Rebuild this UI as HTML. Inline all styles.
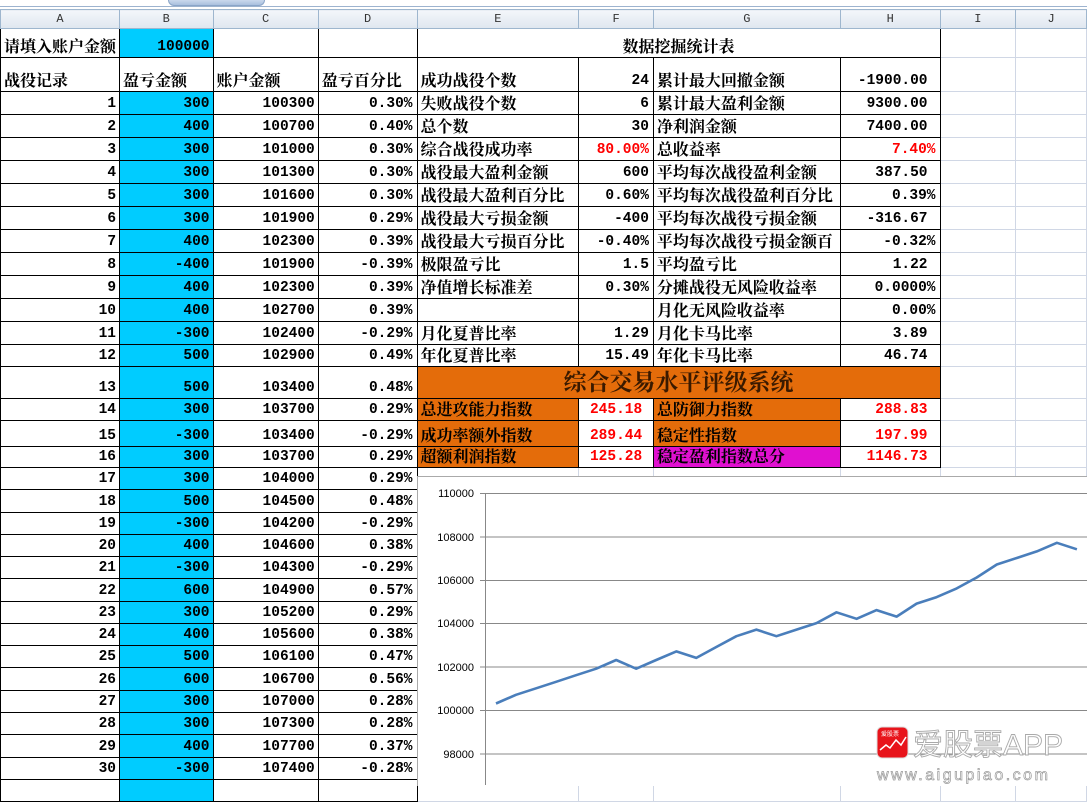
<!DOCTYPE html>
<html><head><meta charset="utf-8"><style>
body{margin:0;width:1087px;height:785px;overflow:hidden;background:#fff;position:relative;font-family:"Liberation Serif","Noto Serif CJK SC",serif;}
#top{position:absolute;left:0;top:0;width:1087px;height:6px;border-bottom:1px solid #9db3cf;background:#fff}
#tab{position:absolute;left:168px;top:0;width:95px;height:5px;background:linear-gradient(#c9d8ec,#a9c0de);border-radius:0 0 8px 8px;border:1px solid #8aa5c8;border-top:none}
table{position:absolute;left:0;top:9px;border-collapse:collapse;table-layout:fixed;}
td{border:1px solid #d0d7e5;padding:0 3px;white-space:nowrap;overflow:hidden;vertical-align:bottom;font-weight:bold;font-size:16px;line-height:19px;font-family:"Liberation Serif","Noto Serif CJK SC",serif;color:#000}
tr.h td{background:linear-gradient(#f3f6fa,#dfe6ef);border:1px solid #9eb6ce;font:12px "Liberation Mono",monospace;text-align:center;vertical-align:middle;color:#333;line-height:16px}
td.k{border-color:#000}
td.n{font-family:"Liberation Mono",monospace;font-size:14.5px;text-align:right}
td.bl{background:#00ccff}
td.r{color:#f00}
td.o{background:#e46c0a}
td.m{background:#e010d0}
td.p4{padding-right:4px}td.p12{padding-right:12px}
#chart{position:absolute;left:417px;top:476px;width:670px;height:309px;background:#fff;border-left:1px solid #aaa;border-top:1px solid #aaa}
</style></head><body>
<div id="top"></div><div id="tab"></div>
<table>
<colgroup><col style="width:115px"><col style="width:94px"><col style="width:106px"><col style="width:99px"><col style="width:162px"><col style="width:75px"><col style="width:187px"><col style="width:100px"><col style="width:77px"><col style="width:72px"></colgroup>
<tr class="h" style="height:19px"><td>A</td><td>B</td><td>C</td><td>D</td><td>E</td><td>F</td><td>G</td><td>H</td><td>I</td><td>J</td></tr>
<tr style="height:29px"><td class="k">请填入账户金额</td><td class="k n bl">100000</td><td class="k"></td><td class="k"></td><td class="k" colspan="4" style="text-align:center">数据挖掘统计表</td><td></td><td></td></tr>
<tr style="height:34px"><td class="k">战役记录</td><td class="k">盈亏金额</td><td class="k">账户金额</td><td class="k">盈亏百分比</td><td class="k">成功战役个数</td><td class="k n p4">24</td><td class="k">累计最大回撤金额</td><td class="k n p12">-1900.00</td><td></td><td></td></tr>
<tr style="height:23px"><td class="k n">1</td><td class="k n bl">300</td><td class="k n">100300</td><td class="k n p4">0.30%</td><td class="k">失败战役个数</td><td class="k n p4">6</td><td class="k">累计最大盈利金额</td><td class="k n p12">9300.00</td><td></td><td></td></tr>
<tr style="height:23px"><td class="k n">2</td><td class="k n bl">400</td><td class="k n">100700</td><td class="k n p4">0.40%</td><td class="k">总个数</td><td class="k n p4">30</td><td class="k">净利润金额</td><td class="k n p12">7400.00</td><td></td><td></td></tr>
<tr style="height:23px"><td class="k n">3</td><td class="k n bl">300</td><td class="k n">101000</td><td class="k n p4">0.30%</td><td class="k">综合战役成功率</td><td class="k n p4 r">80.00%</td><td class="k">总收益率</td><td class="k n p4 r">7.40%</td><td></td><td></td></tr>
<tr style="height:23px"><td class="k n">4</td><td class="k n bl">300</td><td class="k n">101300</td><td class="k n p4">0.30%</td><td class="k">战役最大盈利金额</td><td class="k n p4">600</td><td class="k">平均每次战役盈利金额</td><td class="k n p12">387.50</td><td></td><td></td></tr>
<tr style="height:23px"><td class="k n">5</td><td class="k n bl">300</td><td class="k n">101600</td><td class="k n p4">0.30%</td><td class="k">战役最大盈利百分比</td><td class="k n p4">0.60%</td><td class="k">平均每次战役盈利百分比</td><td class="k n p4">0.39%</td><td></td><td></td></tr>
<tr style="height:23px"><td class="k n">6</td><td class="k n bl">300</td><td class="k n">101900</td><td class="k n p4">0.29%</td><td class="k">战役最大亏损金额</td><td class="k n p4">-400</td><td class="k">平均每次战役亏损金额</td><td class="k n p12">-316.67</td><td></td><td></td></tr>
<tr style="height:23px"><td class="k n">7</td><td class="k n bl">400</td><td class="k n">102300</td><td class="k n p4">0.39%</td><td class="k">战役最大亏损百分比</td><td class="k n p4">-0.40%</td><td class="k">平均每次战役亏损金额百</td><td class="k n p4">-0.32%</td><td></td><td></td></tr>
<tr style="height:23px"><td class="k n">8</td><td class="k n bl">-400</td><td class="k n">101900</td><td class="k n p4">-0.39%</td><td class="k">极限盈亏比</td><td class="k n p4">1.5</td><td class="k">平均盈亏比</td><td class="k n p12">1.22</td><td></td><td></td></tr>
<tr style="height:23px"><td class="k n">9</td><td class="k n bl">400</td><td class="k n">102300</td><td class="k n p4">0.39%</td><td class="k">净值增长标准差</td><td class="k n p4">0.30%</td><td class="k">分摊战役无风险收益率</td><td class="k n p4">0.0000%</td><td></td><td></td></tr>
<tr style="height:23px"><td class="k n">10</td><td class="k n bl">400</td><td class="k n">102700</td><td class="k n p4">0.39%</td><td class="k"></td><td class="k"></td><td class="k">月化无风险收益率</td><td class="k n p4">0.00%</td><td></td><td></td></tr>
<tr style="height:23px"><td class="k n">11</td><td class="k n bl">-300</td><td class="k n">102400</td><td class="k n p4">-0.29%</td><td class="k">月化夏普比率</td><td class="k n p4">1.29</td><td class="k">月化卡马比率</td><td class="k n p12">3.89</td><td></td><td></td></tr>
<tr style="height:22px"><td class="k n">12</td><td class="k n bl">500</td><td class="k n">102900</td><td class="k n p4">0.49%</td><td class="k">年化夏普比率</td><td class="k n p4">15.49</td><td class="k">年化卡马比率</td><td class="k n p12">46.74</td><td></td><td></td></tr>
<tr style="height:32px"><td class="k n">13</td><td class="k n bl">500</td><td class="k n">103400</td><td class="k n p4">0.48%</td><td class="k o" colspan="4" style="text-align:center;font-size:23px;line-height:28px;vertical-align:middle;color:#3a1a00">综合交易水平评级系统</td><td></td><td></td></tr>
<tr style="height:22px"><td class="k n">14</td><td class="k n bl">300</td><td class="k n">103700</td><td class="k n p4">0.29%</td><td class="k o">总进攻能力指数</td><td class="k n r" style="text-align:center">245.18</td><td class="k o">总防御力指数</td><td class="k n p12 r">288.83</td><td></td><td></td></tr>
<tr style="height:26px"><td class="k n">15</td><td class="k n bl">-300</td><td class="k n">103400</td><td class="k n p4">-0.29%</td><td class="k o">成功率额外指数</td><td class="k n r" style="text-align:center">289.44</td><td class="k o">稳定性指数</td><td class="k n p12 r">197.99</td><td></td><td></td></tr>
<tr style="height:21px"><td class="k n">16</td><td class="k n bl">300</td><td class="k n">103700</td><td class="k n p4">0.29%</td><td class="k o">超额利润指数</td><td class="k n r" style="text-align:center">125.28</td><td class="k m">稳定盈利指数总分</td><td class="k n p12 r">1146.73</td><td></td><td></td></tr>
<tr style="height:22px"><td class="k n">17</td><td class="k n bl">300</td><td class="k n">104000</td><td class="k n p4">0.29%</td><td></td><td></td><td></td><td></td><td></td><td></td></tr>
<tr style="height:23px"><td class="k n">18</td><td class="k n bl">500</td><td class="k n">104500</td><td class="k n p4">0.48%</td><td></td><td></td><td></td><td></td><td></td><td></td></tr>
<tr style="height:22px"><td class="k n">19</td><td class="k n bl">-300</td><td class="k n">104200</td><td class="k n p4">-0.29%</td><td></td><td></td><td></td><td></td><td></td><td></td></tr>
<tr style="height:22px"><td class="k n">20</td><td class="k n bl">400</td><td class="k n">104600</td><td class="k n p4">0.38%</td><td></td><td></td><td></td><td></td><td></td><td></td></tr>
<tr style="height:22px"><td class="k n">21</td><td class="k n bl">-300</td><td class="k n">104300</td><td class="k n p4">-0.29%</td><td></td><td></td><td></td><td></td><td></td><td></td></tr>
<tr style="height:23px"><td class="k n">22</td><td class="k n bl">600</td><td class="k n">104900</td><td class="k n p4">0.57%</td><td></td><td></td><td></td><td></td><td></td><td></td></tr>
<tr style="height:22px"><td class="k n">23</td><td class="k n bl">300</td><td class="k n">105200</td><td class="k n p4">0.29%</td><td></td><td></td><td></td><td></td><td></td><td></td></tr>
<tr style="height:22px"><td class="k n">24</td><td class="k n bl">400</td><td class="k n">105600</td><td class="k n p4">0.38%</td><td></td><td></td><td></td><td></td><td></td><td></td></tr>
<tr style="height:22px"><td class="k n">25</td><td class="k n bl">500</td><td class="k n">106100</td><td class="k n p4">0.47%</td><td></td><td></td><td></td><td></td><td></td><td></td></tr>
<tr style="height:23px"><td class="k n">26</td><td class="k n bl">600</td><td class="k n">106700</td><td class="k n p4">0.56%</td><td></td><td></td><td></td><td></td><td></td><td></td></tr>
<tr style="height:22px"><td class="k n">27</td><td class="k n bl">300</td><td class="k n">107000</td><td class="k n p4">0.28%</td><td></td><td></td><td></td><td></td><td></td><td></td></tr>
<tr style="height:22px"><td class="k n">28</td><td class="k n bl">300</td><td class="k n">107300</td><td class="k n p4">0.28%</td><td></td><td></td><td></td><td></td><td></td><td></td></tr>
<tr style="height:23px"><td class="k n">29</td><td class="k n bl">400</td><td class="k n">107700</td><td class="k n p4">0.37%</td><td></td><td></td><td></td><td></td><td></td><td></td></tr>
<tr style="height:22px"><td class="k n">30</td><td class="k n bl">-300</td><td class="k n">107400</td><td class="k n p4">-0.28%</td><td></td><td></td><td></td><td></td><td></td><td></td></tr>
<tr style="height:22px"><td class="k"></td><td class="k bl"></td><td class="k"></td><td class="k"></td><td></td><td></td><td></td><td></td><td></td><td></td></tr>
</table>
<div id="chart"></div>
<svg style="position:absolute;left:0;top:0" width="1087" height="785" font-family="Liberation Sans, sans-serif" font-size="11">
<g stroke="#888" stroke-width="1">
<line x1="480" y1="493.5" x2="1087" y2="493.5"/><line x1="480" y1="537" x2="1087" y2="537"/><line x1="480" y1="580.5" x2="1087" y2="580.5"/><line x1="480" y1="623.5" x2="1087" y2="623.5"/><line x1="480" y1="667" x2="1087" y2="667"/><line x1="480" y1="710.5" x2="1087" y2="710.5"/><line x1="480" y1="754" x2="1087" y2="754"/>
<line x1="485.5" y1="493" x2="485.5" y2="785"/></g>
<g fill="#000" text-anchor="end"><text x="474" y="497">110000</text><text x="474" y="541">108000</text><text x="474" y="584">106000</text><text x="474" y="627">104000</text><text x="474" y="671">102000</text><text x="474" y="714">100000</text><text x="474" y="758">98000</text></g>
<polyline fill="none" stroke="#4a7ebb" stroke-width="2.6" stroke-linejoin="round" points="496,703.5 516,694.8 536.1,688.3 556.1,681.8 576.1,675.2 596.2,668.7 616.2,660 636.2,668.7 656.2,660 676.3,651.4 696.3,657.9 716.3,647 736.4,636.2 756.4,629.6 776.4,636.2 796.5,629.6 816.5,623.1 836.5,612.3 856.6,618.8 876.6,610.1 896.6,616.6 916.6,603.6 936.7,597.1 956.7,588.4 976.7,577.5 996.8,564.5 1016.8,558 1036.8,551.4 1056.9,542.8 1076.9,549.3"/>
<rect x="877" y="727" width="31" height="31" rx="5" fill="#e8141b" stroke="#ddd"/>
<polyline points="880,750 886,745 890,748 896,740 901,745 906,737" fill="none" stroke="#fff" stroke-width="1.5"/>
<text x="881" y="736" font-size="6" fill="#fff">爱股票</text>
<text x="913" y="755" font-size="30" fill="#fff" stroke="#aaa" stroke-width="0.9" font-family="Liberation Sans, Noto Sans CJK SC, sans-serif">爱股票APP</text>
<text x="877" y="780" font-size="16" fill="#fff" stroke="#999" stroke-width="0.7" letter-spacing="2.5">www.aigupiao.com</text>
</svg>
</body></html>
